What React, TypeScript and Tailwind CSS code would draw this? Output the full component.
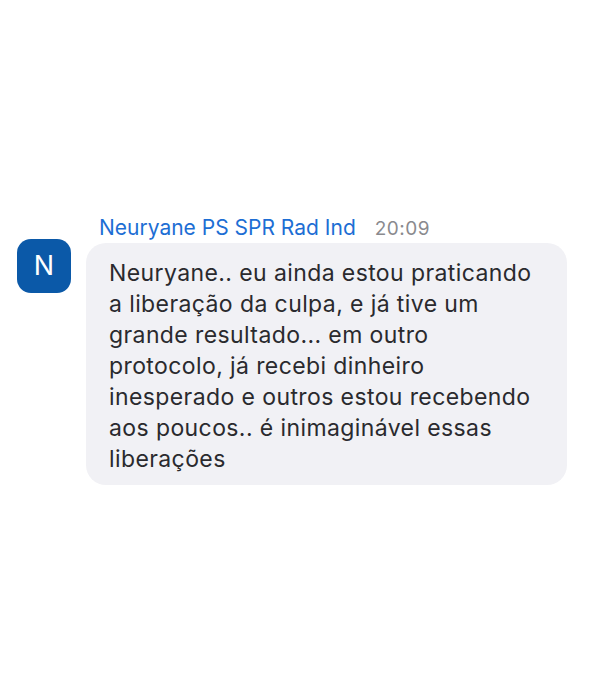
export default function App() {
  return (
    <div className="w-[612px] h-[686px] bg-white" style={{ fontFamily: "Inter, 'Liberation Sans', sans-serif" }}>
      <div className="pt-[212px] pl-[17px] flex gap-[15px]">
        {/* Avatar */}
        <div className="mt-[27px] w-[54px] h-[54px] rounded-[14px] bg-[#0b59a8] flex items-center justify-center text-white text-[27px] shrink-0">
          N
        </div>

        <div className="flex flex-col">
          {/* Header */}
          <div className="flex items-baseline gap-[19px] pl-[13px] h-[28px]">
            <span className="text-[21px] text-[#1d6ed4]">Neuryane PS SPR Rad Ind</span>
            <span className="text-[19px] tracking-[0.5px] text-[#8a8a8e]">20:09</span>
          </div>

          {/* Bubble */}
          <div className="mt-[3px] w-[481px] rounded-[20px] bg-[#f1f1f5] pl-[23px] pr-[10px] pt-[15px] pb-[10px] text-[23px] leading-[31px] tracking-[0.4px] text-[#2a2a2e]">
            Neuryane.. eu ainda estou praticando
            <br />a liberação da culpa, e já tive um
            <br />grande resultado... em outro
            <br />protocolo, já recebi dinheiro
            <br />inesperado e outros estou recebendo
            <br />aos poucos.. é inimaginável essas
            <br />liberações
          </div>
        </div>
      </div>
    </div>
  );
}
